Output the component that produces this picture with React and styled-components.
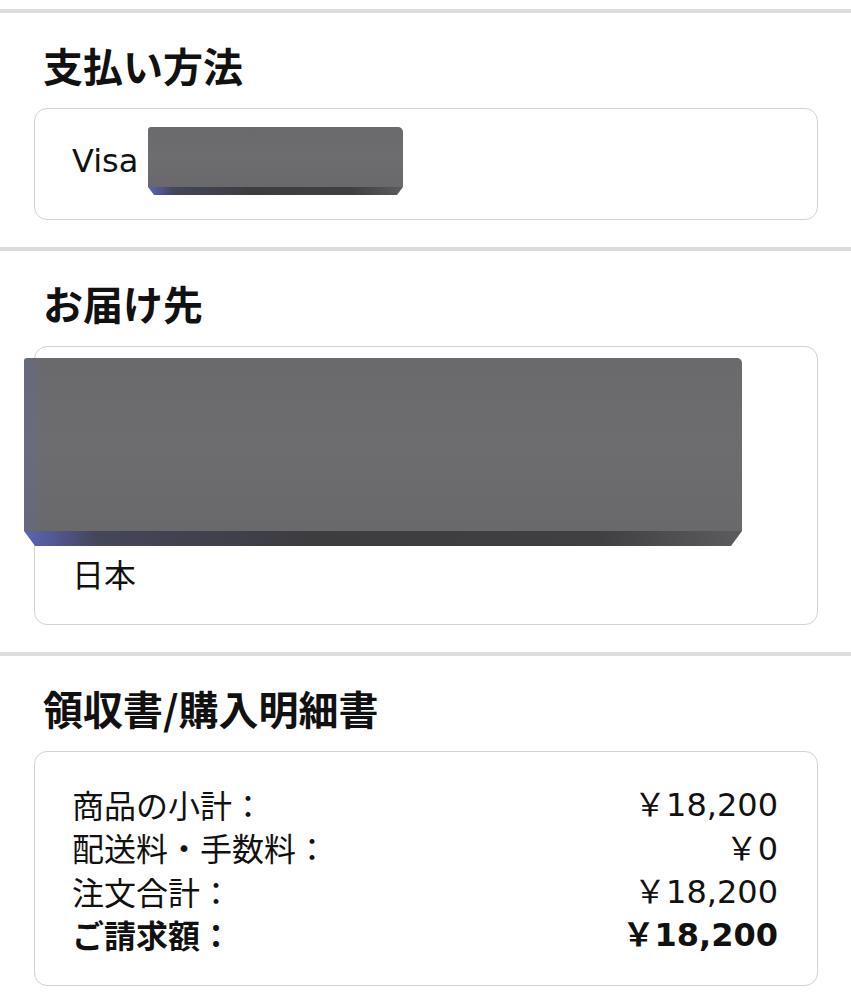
import React from "react";
import styled, { createGlobalStyle } from "styled-components";

const GlobalStyle = createGlobalStyle`
  html, body {
    margin: 0;
    padding: 0;
    background: #ffffff;
  }
  body {
    font-family: "DejaVu Sans", "Noto Sans CJK JP", sans-serif;
    color: #111111;
  }
`;

const Page = styled.main`
  width: 851px;
  padding-top: 9px;
  box-sizing: border-box;
`;

const Section = styled.section`
  border-top: 4px solid #dcdcdc;
  padding: 32px 33px 27px 34px;
`;

const Heading = styled.h2`
  margin: 0 0 23px 9px;
  font-family: "Noto Sans CJK JP", sans-serif;
  font-size: 40px;
  line-height: 40px;
  height: 40px;
  font-weight: 700;
  color: #111111;
  white-space: nowrap;
`;

const Card = styled.div`
  position: relative;
  border: 1px solid #d2d2d2;
  border-radius: 13px;
  padding: 31px 39px ${(p) => p.$bottom || 29}px 37px;
  font-size: 32px;
`;

const Line = styled.div`
  height: ${(p) => p.$h || 43}px;
  line-height: ${(p) => p.$h || 43}px;
  white-space: nowrap;
`;

const HiddenLines = styled.div`
  height: ${(p) => p.$lines * 43.4}px;
`;

const Redaction = styled.div`
  position: absolute;
  left: ${(p) => p.$x}px;
  top: ${(p) => p.$y}px;
  width: ${(p) => p.$w}px;
  height: ${(p) => p.$h}px;
  display: flex;
  flex-direction: column;
`;

const Face = styled.div`
  flex: 1;
  background:
    linear-gradient(90deg, rgba(90, 104, 180, 0.3) 0px, rgba(90, 104, 180, 0) ${(p) => p.$tint}px),
    linear-gradient(180deg, #6a6a6c 0%, #6d6d6f 50%, #69696b 100%);
  border-radius: 3px 5px 0 0;
`;

const Bevel = styled.div`
  height: ${(p) => p.$h}px;
  background: linear-gradient(
    90deg,
    #5866b8 0%,
    #44465a 10%,
    #3d3d40 40%,
    #404043 80%,
    #5c5c5f 100%
  );
  clip-path: polygon(
    0 0,
    100% 0,
    calc(100% - ${(p) => p.$inset}px) 100%,
    ${(p) => p.$inset}px 100%
  );
`;

const Row = styled.div`
  display: flex;
  justify-content: space-between;
  align-items: center;
  height: 43.3px;
  line-height: 43.3px;
  white-space: nowrap;
  font-weight: ${(p) => (p.$strong ? 700 : 400)};
`;

const Label = styled.span`
  font-family: "Noto Sans CJK JP", sans-serif;
`;

const Value = styled.span`
  text-align: right;
`;

const Yen = styled.span`
  font-family: "Noto Sans CJK JP", sans-serif;
`;

const rows = [
  { label: "商品の小計：", value: "18,200" },
  { label: "配送料・手数料：", value: "0" },
  { label: "注文合計：", value: "18,200" },
  { label: "ご請求額：", value: "18,200", strong: true },
];

function Masked({ x, y, w, h, bevel, inset, tint }) {
  return (
    <Redaction $x={x} $y={y} $w={w} $h={h} aria-hidden="true">
      <Face $tint={tint} />
      <Bevel $h={bevel} $inset={inset} />
    </Redaction>
  );
}

export default function App() {
  return (
    <>
      <GlobalStyle />
      <Page>
        <Section>
          <Heading>支払い方法</Heading>
          <Card $bottom={36}>
            <Line>Visa</Line>
            <Masked x={113} y={18} w={255} h={68} bevel={8} inset={6} tint={0} />
          </Card>
        </Section>

        <Section>
          <Heading>お届け先</Heading>
          <Card>
            <HiddenLines $lines={4} />
            <Line $h={43.4}>
              <Label>日本</Label>
            </Line>
            <Masked x={-11} y={11} w={718} h={188} bevel={15} inset={11} tint={18} />
          </Card>
        </Section>

        <Section>
          <Heading>領収書/購入明細書</Heading>
          <Card>
            {rows.map((r) => (
              <Row key={r.label} $strong={r.strong}>
                <Label>{r.label}</Label>
                <Value>
                  <Yen>￥</Yen>
                  {r.value}
                </Value>
              </Row>
            ))}
          </Card>
        </Section>
      </Page>
    </>
  );
}
